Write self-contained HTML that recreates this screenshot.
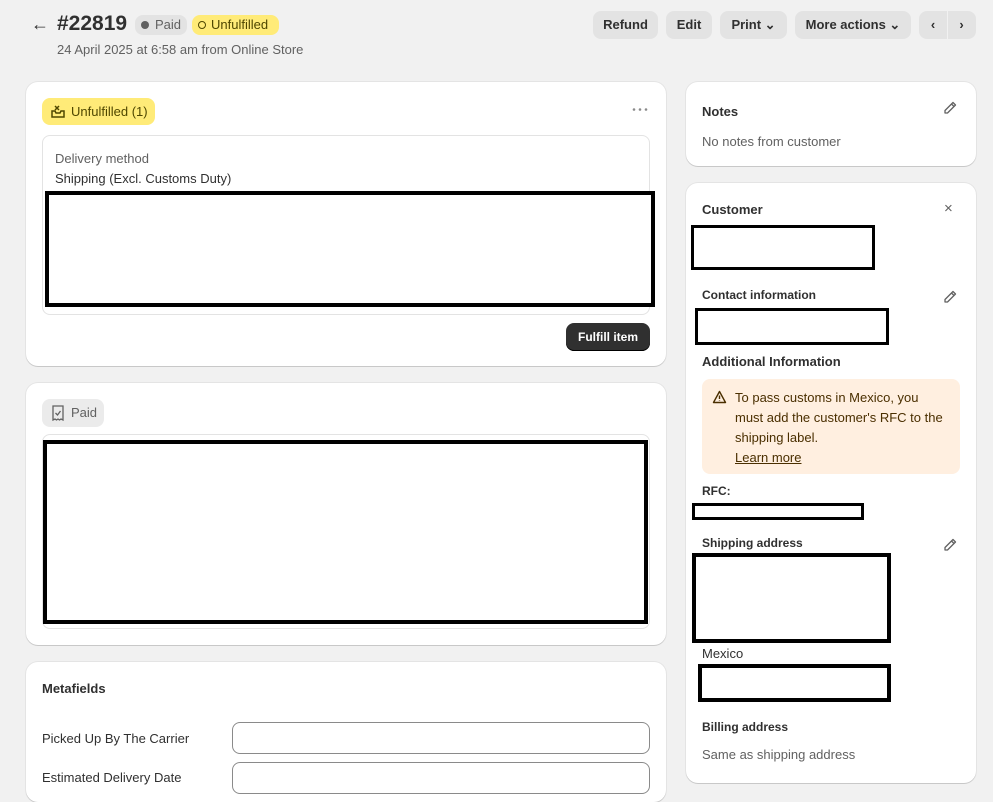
<!DOCTYPE html>
<html><head><meta charset="utf-8"><style>
*{box-sizing:border-box;margin:0;padding:0}
body{width:993px;height:782px;background:#f1f1f1;font-family:"Liberation Sans",sans-serif;color:#303030;position:relative;overflow:hidden;font-size:13px}
.a{position:absolute}
.card{position:absolute;background:#fff;border-radius:12px;box-shadow:0 1px 0 rgba(0,0,0,.12),0 0 0 1px rgba(0,0,0,.05)}
.btn{position:absolute;top:11px;height:28px;background:#e3e3e3;border-radius:8px;font-size:13px;font-weight:bold;color:#303030;line-height:28px;text-align:center}
.bx{position:absolute;border:4px solid #000;background:#fff}
.h{font-weight:bold;font-size:13px;color:#303030}
.t{color:#616161}
</style></head><body>
<div class="a" style="left:31px;top:14px;font-size:18px">&#8592;</div>
<div class="a" style="left:57px;top:12px;font-size:21px;font-weight:bold;color:#303030">#22819</div>
<div class="a" style="left:135px;top:15px;height:20px;width:52px;background:#e3e3e3;border-radius:8px;font-size:13px;line-height:20px;color:#616161;padding-left:6px"><span style="display:inline-block;width:8px;height:8px;border-radius:50%;background:#616161;margin-right:6px"></span>Paid</div>
<div class="a" style="left:192px;top:15px;height:20px;width:87px;background:#ffeb78;border-radius:8px;font-size:13px;line-height:20px;color:#4f4700;padding-left:6px"><span style="display:inline-block;width:8px;height:8px;border-radius:50%;border:1.5px solid #4f4700;margin-right:5px"></span>Unfulfilled</div>
<div class="a t" style="left:57px;top:42px;font-size:13px">24 April 2025 at 6:58 am from Online Store</div>
<div class="btn" style="left:593px;width:65px">Refund</div>
<div class="btn" style="left:666px;width:46px">Edit</div>
<div class="btn" style="left:720px;width:67px">Print &#8964;</div>
<div class="btn" style="left:795px;width:116px">More actions &#8964;</div>
<div class="btn" style="left:919px;width:57px"><span style="display:inline-block;width:28px;border-right:1px solid #f1f1f1">&#8249;</span><span style="display:inline-block;width:28px">&#8250;</span></div>

<div class="card" style="left:26px;top:82px;width:640px;height:284px"></div>
<div class="a" style="left:42px;top:98px;width:113px;height:27px;background:#ffeb78;border-radius:8px;font-size:13px;line-height:27px;color:#4f4700;padding-left:29px">Unfulfilled (1)</div>
<svg class="a" style="left:50px;top:104px" width="16" height="15" viewBox="0 0 16 15"><path d="M2 7h3l1 2h4l1-2h3v6H2z M5 2l4 4M9 2L5 6" fill="none" stroke="#4f4700" stroke-width="1.5"/></svg>
<svg class="a" style="left:631px;top:107px" width="18" height="5"><circle cx="3" cy="2.5" r="1.3" fill="#8a8a8a"/><circle cx="9" cy="2.5" r="1.3" fill="#8a8a8a"/><circle cx="15" cy="2.5" r="1.3" fill="#8a8a8a"/></svg>
<div class="a" style="left:42px;top:135px;width:608px;height:180px;border:1px solid #e3e3e3;border-radius:8px"></div>
<div class="a t" style="left:55px;top:151px">Delivery method</div>
<div class="a" style="left:55px;top:171px">Shipping (Excl. Customs Duty)</div>
<div class="bx" style="left:45px;top:191px;width:610px;height:116px"></div>
<div class="a" style="left:566px;top:323px;width:84px;height:28px;background:#303030;border-radius:8px;color:#fff;font-weight:bold;font-size:12px;line-height:28px;text-align:center;box-shadow:inset 0 -1px 0 #000">Fulfill item</div>

<div class="card" style="left:26px;top:383px;width:640px;height:262px"></div>
<div class="a" style="left:42px;top:399px;width:62px;height:28px;background:#ebebeb;border-radius:8px;line-height:28px;color:#616161;padding-left:29px">Paid</div>
<svg class="a" style="left:51px;top:405px" width="14" height="16" viewBox="0 0 14 16"><path d="M2 1h10v14l-2-1-1.5 1-1.5-1-1.5 1L4 14l-2 1z M4.5 8l2 2 3-4" fill="none" stroke="#616161" stroke-width="1.3"/></svg>
<div class="a" style="left:42px;top:434px;width:608px;height:195px;border:1px solid #e3e3e3;border-radius:8px"></div>
<div class="bx" style="left:43px;top:440px;width:605px;height:184px"></div>

<div class="card" style="left:26px;top:662px;width:640px;height:140px"></div>
<div class="a h" style="left:42px;top:681px">Metafields</div>
<div class="a" style="left:42px;top:731px">Picked Up By The Carrier</div>
<div class="a" style="left:232px;top:722px;width:418px;height:32px;border:1px solid #8a8a8a;border-radius:8px"></div>
<div class="a" style="left:42px;top:770px">Estimated Delivery Date</div>
<div class="a" style="left:232px;top:762px;width:418px;height:32px;border:1px solid #8a8a8a;border-radius:8px"></div>

<svg width="0" height="0" style="position:absolute"><defs><symbol id="pen" viewBox="0 0 16 16"><path d="M11 2.5l2.5 2.5-8 8H3v-2.5z M9.5 4l2.5 2.5" fill="none" stroke="#616161" stroke-width="1.3" stroke-linejoin="round"/></symbol></defs></svg>

<div class="card" style="left:686px;top:82px;width:290px;height:84px"></div>
<div class="a h" style="left:702px;top:104px">Notes</div>
<svg class="a" style="left:942px;top:100px" width="16" height="16"><use href="#pen"/></svg>
<div class="a t" style="left:702px;top:134px">No notes from customer</div>

<div class="card" style="left:686px;top:183px;width:290px;height:600px"></div>
<div class="a h" style="left:702px;top:202px">Customer</div>
<div class="a t" style="left:944px;top:200px;font-size:15px">&#215;</div>
<div class="bx" style="left:691px;top:225px;width:184px;height:45px;border-width:3px"></div>
<div class="a h" style="left:702px;top:288px;font-size:12px">Contact information</div>
<svg class="a" style="left:942px;top:289px" width="16" height="16"><use href="#pen"/></svg>
<div class="bx" style="left:695px;top:308px;width:194px;height:37px;border-width:3px"></div>
<div class="a h" style="left:702px;top:354px">Additional Information</div>
<div class="a" style="left:702px;top:379px;width:258px;height:95px;background:#ffefe0;border-radius:8px"></div>
<svg class="a" style="left:712px;top:390px" width="15" height="14" viewBox="0 0 15 14"><path d="M7.5 1.5L1.5 12.5h12z M7.5 5.5v3.5 M7.5 10.5v.5" fill="none" stroke="#4a2f00" stroke-width="1.4" stroke-linejoin="round"/></svg>
<div class="a" style="left:735px;top:388px;width:208px;line-height:20px;color:#4a2f00">To pass customs in Mexico, you must add the customer's RFC to the shipping label.<br><u>Learn more</u></div>
<div class="a h" style="left:702px;top:484px;font-size:12px">RFC:</div>
<div class="bx" style="left:692px;top:503px;width:172px;height:17px;border-width:3px"></div>
<div class="a h" style="left:702px;top:536px;font-size:12px">Shipping address</div>
<svg class="a" style="left:942px;top:537px" width="16" height="16"><use href="#pen"/></svg>
<div class="bx" style="left:692px;top:553px;width:199px;height:90px"></div>
<div class="a" style="left:702px;top:646px">Mexico</div>
<div class="bx" style="left:698px;top:664px;width:193px;height:38px"></div>
<div class="a h" style="left:702px;top:720px;font-size:12px">Billing address</div>
<div class="a t" style="left:702px;top:747px">Same as shipping address</div>
</body></html>
